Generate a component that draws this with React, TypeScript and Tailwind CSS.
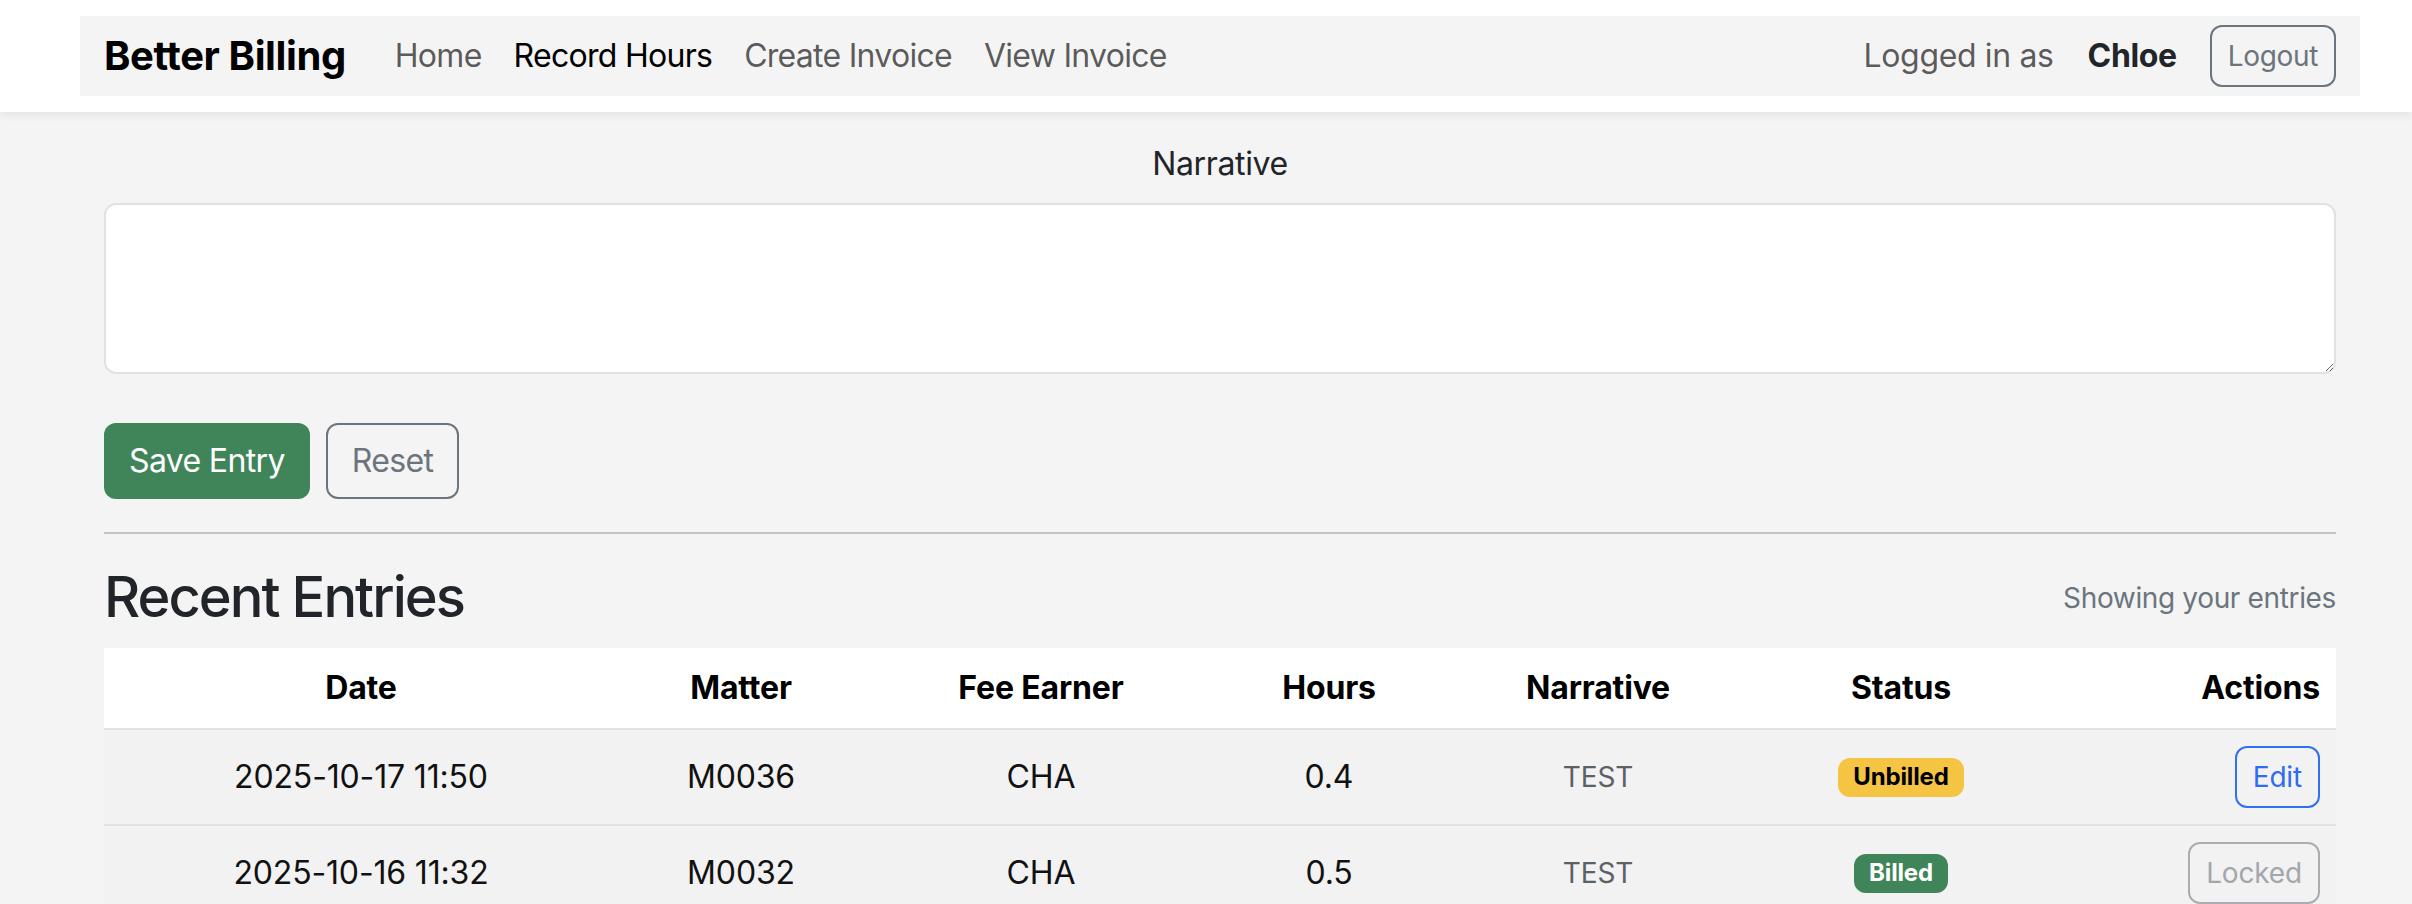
import React from 'react';

interface Entry {
  date: string;
  matter: string;
  feeEarner: string;
  hours: string;
  narrative: string;
  billed: boolean;
}

const entries: Entry[] = [
  { date: '2025-10-17 11:50', matter: 'M0036', feeEarner: 'CHA', hours: '0.4', narrative: 'TEST', billed: false },
  { date: '2025-10-16 11:32', matter: 'M0032', feeEarner: 'CHA', hours: '0.5', narrative: 'TEST', billed: true },
];

const navLinks = [
  { label: 'Home', active: false },
  { label: 'Record Hours', active: true },
  { label: 'Create Invoice', active: false },
  { label: 'View Invoice', active: false },
];

const Navbar: React.FC = () => (
  <nav className="bg-white py-4 shadow-[0_4px_8px_rgba(0,0,0,0.06)] relative z-10">
    <div className="ml-[80px] mr-[52px] h-[80px] bg-[#f4f4f4] px-6 flex items-center justify-between">
      <div className="flex items-center">
        <span className="text-[40px] font-bold text-black tracking-[-0.01em] mr-[49px]">Better Billing</span>
        <div className="flex items-center gap-[32px] tracking-[-0.045em]">
          {navLinks.map((link) => (
            <a
              key={link.label}
              href="#"
              className={link.active ? 'text-[32px] text-black' : 'text-[32px] text-black/65'}
            >
              {link.label}
            </a>
          ))}
        </div>
      </div>
      <div className="flex items-center">
        <span className="text-[32px] text-black/65">Logged in as</span>
        <span className="text-[32px] font-bold text-[#212529] ml-[34px]">Chloe</span>
        <button className="ml-[33px] h-[62px] px-[16px] border-2 border-[#6c757d] rounded-[12px] text-[28px] text-[#6c757d]">
          Logout
        </button>
      </div>
    </div>
  </nav>
);

const StatusBadge: React.FC<{ billed: boolean }> = ({ billed }) =>
  billed ? (
    <span className="inline-flex items-center h-[39px] px-[15px] rounded-[12px] bg-[#408559] text-white text-[24px] font-bold">
      Billed
    </span>
  ) : (
    <span className="inline-flex items-center h-[39px] px-[15px] rounded-[12px] bg-[#f5c443] text-black text-[24px] font-bold">
      Unbilled
    </span>
  );

const App: React.FC = () => {
  return (
    <div className="h-screen overflow-hidden bg-[#f4f4f4] font-['Inter','Noto_Sans',sans-serif] tracking-[-0.022em] text-[#212529]">
      <Navbar />
      <main className="ml-[80px] mr-[52px] px-6 pt-[28px]">
        <label className="block text-center text-[32px] leading-[48px] mb-[15px]">Narrative</label>
        <textarea className="block w-full h-[171px] bg-white border-2 border-[#dee2e6] rounded-[12px] p-4 text-[32px] outline-none" />

        <div className="flex gap-4 mt-[49px] tracking-[-0.04em]">
          <button className="h-[76px] px-[25px] rounded-[12px] bg-[#408559] text-white text-[32px]">Save Entry</button>
          <button className="h-[76px] px-[24px] rounded-[12px] border-2 border-[#6c757d] text-[#6c757d] text-[32px]">
            Reset
          </button>
        </div>

        <hr className="mt-[33px] border-0 border-t-2 border-[#c4c4c4]" />

        <div className="flex items-center justify-between mt-[30px]">
          <h3 className="text-[56px] font-medium leading-[1.2] tracking-[-0.035em] text-[#212529]">Recent Entries</h3>
          <span className="text-[28px] text-[#6c757d]">Showing your entries</span>
        </div>

        <table className="w-full table-fixed border-collapse mt-[17px] tracking-[-0.01em]">
          <colgroup>
            <col className="w-[514px]" />
            <col className="w-[246px]" />
            <col className="w-[354px]" />
            <col className="w-[222px]" />
            <col className="w-[316px]" />
            <col className="w-[290px]" />
            <col className="w-[290px]" />
          </colgroup>
          <thead>
            <tr className="bg-white border-b-2 border-[#dee2e6]">
              {['Date', 'Matter', 'Fee Earner', 'Hours', 'Narrative', 'Status'].map((h) => (
                <th key={h} className="p-4 text-[32px] leading-[48px] font-bold text-black text-center">
                  {h}
                </th>
              ))}
              <th className="p-4 text-[32px] leading-[48px] font-bold text-black text-right">Actions</th>
            </tr>
          </thead>
          <tbody>
            {entries.map((e) => (
              <tr key={e.date} className="bg-[#f2f2f2] border-b-2 border-[#dee2e6]">
                <td className="p-4 text-center text-[32px] text-[#111]">{e.date}</td>
                <td className="p-4 text-center text-[32px] text-[#111]">{e.matter}</td>
                <td className="p-4 text-center text-[32px] text-[#111]">{e.feeEarner}</td>
                <td className="p-4 text-center text-[32px] text-[#111]">{e.hours}</td>
                <td className="p-4 text-center text-[28px] text-[#5c6166]">{e.narrative}</td>
                <td className="p-4 text-center">
                  <StatusBadge billed={e.billed} />
                </td>
                <td className="p-4 text-right">
                  {e.billed ? (
                    <button
                      disabled
                      className="h-[62px] px-[16px] rounded-[12px] border-2 border-[#a9adb1] text-[#a3a7ab] text-[28px] align-middle"
                    >
                      Locked
                    </button>
                  ) : (
                    <button className="h-[62px] px-[16px] rounded-[12px] border-2 border-[#3170f0] text-[#2f6cf2] text-[28px] align-middle">
                      Edit
                    </button>
                  )}
                </td>
              </tr>
            ))}
          </tbody>
        </table>
      </main>
    </div>
  );
};

export default App;
